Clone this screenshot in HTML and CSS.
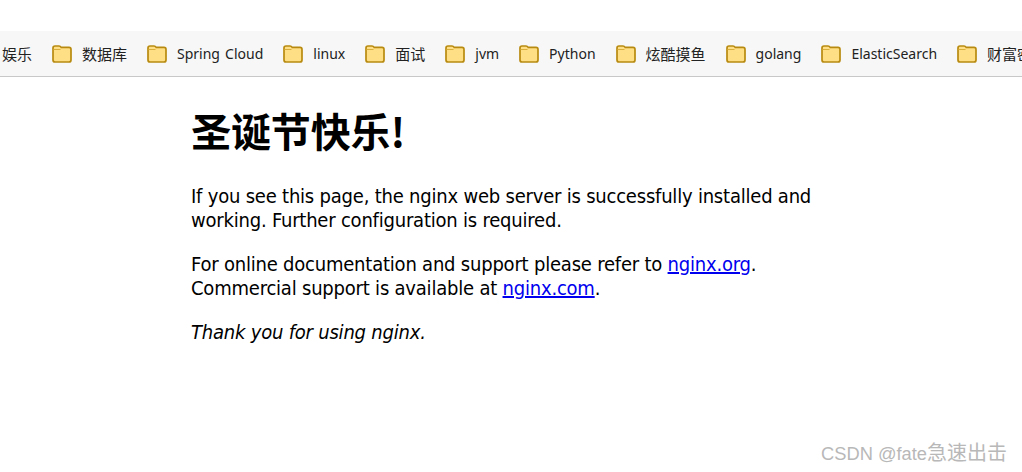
FILE: index.html
```html
<!DOCTYPE html>
<html lang="zh">
<head>
<meta charset="utf-8">
<title>Welcome to nginx!</title>
<link rel="stylesheet" href="styles.css">
</head>
<body>
<svg class="defs" width="0" height="0" aria-hidden="true">
  <symbol id="folder" viewBox="0 0 20 18">
    <path d="M1 15V3C1 1.800 1.800 1 3 1H7C8 1 8.600 1.400 9.200 2.400H17C18.200 2.400 19 3.200 19 4.400V15C19 16.200 18.200 17 17 17H3C1.800 17 1 16.200 1 15Z" fill="#ffdf85" stroke="#b88a10" stroke-width="1.700"/>
    <path d="M1.500 4.500H8.500" fill="none" stroke="#d9ae3a" stroke-width="1"/>
  </symbol>
</svg>
<nav class="bookmarks">
  <span class="label cjk">娱乐</span>
  <a class="mark"><svg class="folder"><use href="#folder"/></svg><span class="label cjk">数据库</span></a>
  <a class="mark"><svg class="folder"><use href="#folder"/></svg><span class="label">Spring Cloud</span></a>
  <a class="mark"><svg class="folder"><use href="#folder"/></svg><span class="label">linux</span></a>
  <a class="mark"><svg class="folder"><use href="#folder"/></svg><span class="label cjk">面试</span></a>
  <a class="mark"><svg class="folder"><use href="#folder"/></svg><span class="label">jvm</span></a>
  <a class="mark"><svg class="folder"><use href="#folder"/></svg><span class="label">Python</span></a>
  <a class="mark"><svg class="folder"><use href="#folder"/></svg><span class="label cjk">炫酷摸鱼</span></a>
  <a class="mark"><svg class="folder"><use href="#folder"/></svg><span class="label">golang</span></a>
  <a class="mark"><svg class="folder"><use href="#folder"/></svg><span class="label">ElasticSearch</span></a>
  <a class="mark"><svg class="folder"><use href="#folder"/></svg><span class="label cjk">财富密码</span></a>
</nav>
<main class="content">
  <h1>圣诞节快乐!</h1>
  <p>If you see this page, the nginx web server is successfully installed and working. Further configuration is required.</p>
  <p>For online documentation and support please refer to <a href="#">nginx.org</a>.<br>Commercial support is available at <a href="#">nginx.com</a>.</p>
  <p><em>Thank you for using nginx.</em></p>
</main>
<div class="watermark">CSDN @fate<span class="wm-cjk">急速出击</span></div>
</body>
</html>
```
FILE: styles.css
```css
html, body { margin: 0; padding: 0; background: #fff; }
body { position: relative; height: 472px; overflow: hidden; font-family: "DejaVu Sans", "Noto Sans CJK SC", sans-serif; color: #000; }
.defs { position: absolute; }
.bookmarks { display: flex; align-items: center; gap: 20px; height: 45px; margin-top: 31px; padding-left: 2px; background: #f7f7f7; border-bottom: 1px solid #c8c8c8; overflow: hidden; white-space: nowrap; }
.mark { display: flex; align-items: center; gap: 10px; flex: none; }
.folder { width: 20px; height: 18px; flex: none; }
.label { font: 14px/20px "Noto Sans", "Noto Sans CJK SC", sans-serif; word-spacing: 1.500px; color: #222; }
.cjk { font-size: 15px; }
.content { width: 640px; margin: 0 auto; }
h1 { margin: 0; padding-top: 28px; font: 700 40px/50px "Noto Sans CJK SC", sans-serif; letter-spacing: -0.100px; }
p { margin: 20px 0 0; font: 20px/24px "DejaVu Sans", "Noto Sans CJK SC", sans-serif; font-stretch: condensed; letter-spacing: -0.210px; }
h1 + p { margin-top: 29px; }
.watermark { position: absolute; right: 15px; bottom: 6px; font: 18.300px/24px "Liberation Sans", "Noto Sans CJK SC", sans-serif; color: #b8b8b8; }
.wm-cjk { font-size: 20px; }
```
